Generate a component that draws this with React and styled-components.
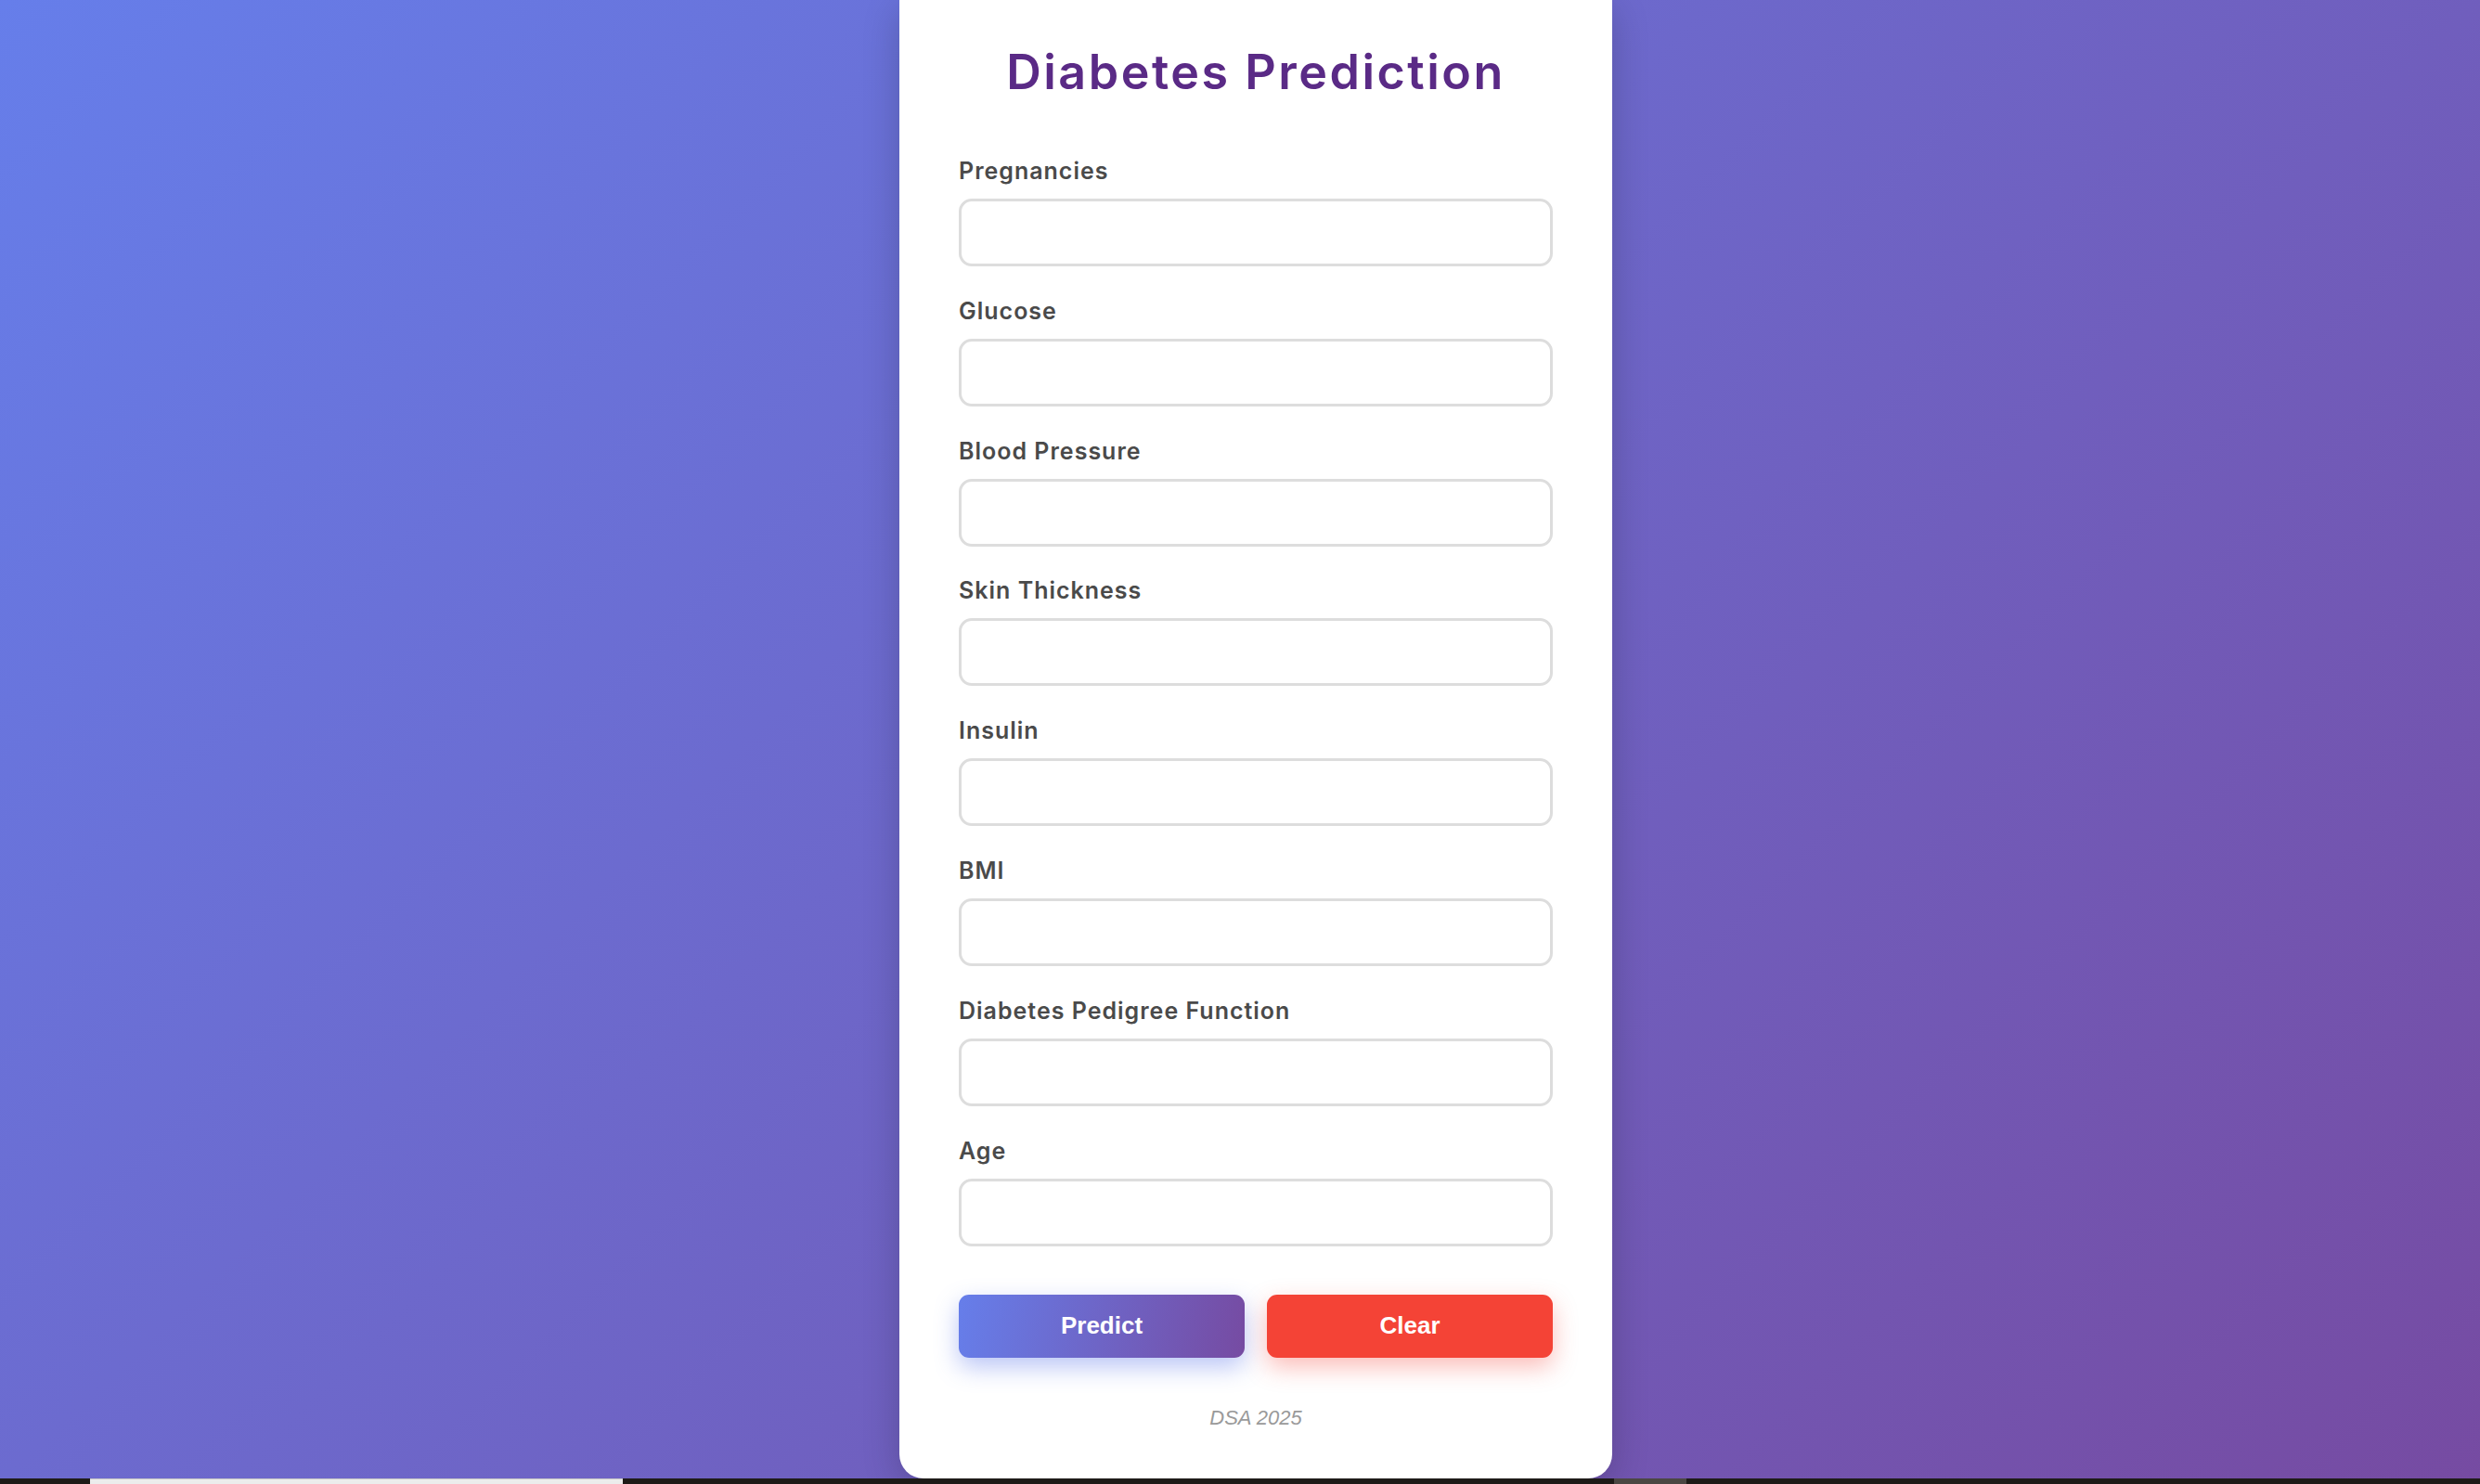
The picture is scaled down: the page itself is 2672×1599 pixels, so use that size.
import React from "react";
import styled, { createGlobalStyle } from "styled-components";

//page reset
const GlobalStyle = createGlobalStyle`
  html, body {
    margin: 0;
    padding: 0;
  }
  * {
    box-sizing: border-box;
  }
`;

const fields = [
  "Pregnancies",
  "Glucose",
  "Blood Pressure",
  "Skin Thickness",
  "Insulin",
  "BMI",
  "Diabetes Pedigree Function",
  "Age",
];

const App = () => {
  return (
    <>
      <GlobalStyle />
      <Page>
        <Main>
          <Card>
            <Title>Diabetes Prediction</Title>
            <Form onSubmit={(e) => e.preventDefault()}>
              <FieldList>
                {fields.map((name) => (
                  <Field key={name}>
                    <Label>{name}</Label>
                    <Input type="number" />
                  </Field>
                ))}
              </FieldList>
              <Buttons>
                <Button type="submit" variant="predict">Predict</Button>
                <Button type="reset" variant="clear">Clear</Button>
              </Buttons>
            </Form>
            <Footer>DSA 2025</Footer>
          </Card>
        </Main>
        <Taskbar>
          <TaskSlot width="97px" />
          <TaskSlot width="574px" tone="light" />
          <TaskSlot width="1068px" />
          <TaskSlot width="78px" tone="grey" />
          <TaskSlot grow />
        </Taskbar>
      </Page>
    </>
  );
};

const Page = styled.div`
  height: 1599px;
  display: flex;
  flex-direction: column;
  background: linear-gradient(135deg, #667eea 0%, #764ba2 100%);
  overflow: hidden;
`;

const Main = styled.div`
  flex: 1;
  display: flex;
  justify-content: center;
  align-items: flex-start;
  padding-left: 34px;
`;

const Card = styled.div`
  width: 768px;
  background-color: white;
  border-radius: 0 0 26px 26px;
  padding: 47px 64px 52px;
  box-shadow: 0 10px 40px rgba(0, 0, 0, 0.2);
  display: flex;
  flex-direction: column;
`;

const Title = styled.h1`
  margin: 0;
  font-family: Inter, "Noto Sans", sans-serif;
  font-weight: 600;
  font-size: 52px;
  line-height: 62px;
  letter-spacing: 2.5px;
  text-align: center;
  color: #5a2a86;
`;

const Form = styled.form`
  margin-top: 60px;
  display: flex;
  flex-direction: column;
`;

const FieldList = styled.div`
  display: flex;
  flex-direction: column;
  gap: 32.8px;
`;

const Field = styled.div`
  display: flex;
  flex-direction: column;
`;

const Label = styled.label`
  font-family: Inter, "Noto Sans", sans-serif;
  font-weight: 600;
  font-size: 25px;
  line-height: 30px;
  letter-spacing: 1px;
  color: #4a4a4a;
  margin-bottom: 15px;
`;

const Input = styled.input`
  width: 100%;
  height: 73px;
  border: 3px solid #dddddd;
  border-radius: 14px;
  background: white;
  padding: 0 20px;
  font-size: 25px;
  outline: none;
  -moz-appearance: textfield;
  &::-webkit-outer-spin-button,
  &::-webkit-inner-spin-button {
    -webkit-appearance: none;
    margin: 0;
  }
`;

const Buttons = styled.div`
  margin-top: 52.4px;
  display: grid;
  grid-template-columns: 1fr 1fr;
  gap: 24px;
`;

const Button = styled.button`
  height: 68px;
  border: none;
  border-radius: 11px;
  font-family: "Liberation Sans", Arial, sans-serif;
  font-weight: bold;
  font-size: 26px;
  color: white;
  cursor: pointer;
  background: ${(p) =>
    p.variant === "predict"
      ? "linear-gradient(100deg, #667eea 0%, #764ba2 100%)"
      : "#f44336"};
  box-shadow: ${(p) =>
    p.variant === "predict"
      ? "0 10px 26px rgba(102, 126, 234, 0.45)"
      : "0 10px 26px rgba(244, 67, 54, 0.35)"};
`;

const Footer = styled.p`
  margin: 52px 0 0;
  font-family: "Liberation Sans", Arial, sans-serif;
  font-style: italic;
  font-size: 22px;
  line-height: 26px;
  text-align: center;
  color: #9a9a9a;
`;

const Taskbar = styled.div`
  height: 6px;
  display: flex;
  background-color: #1e1b18;
`;

const TaskSlot = styled.div`
  width: ${(p) => p.width || "auto"};
  flex: ${(p) => (p.grow ? 1 : "none")};
  background-color: ${(p) =>
    p.tone === "light" ? "#ececec" : p.tone === "grey" ? "#4b4743" : "transparent"};
  border-top: ${(p) => (p.tone === "light" ? "1px solid #c6c6c6" : "none")};
`;

export default App;
